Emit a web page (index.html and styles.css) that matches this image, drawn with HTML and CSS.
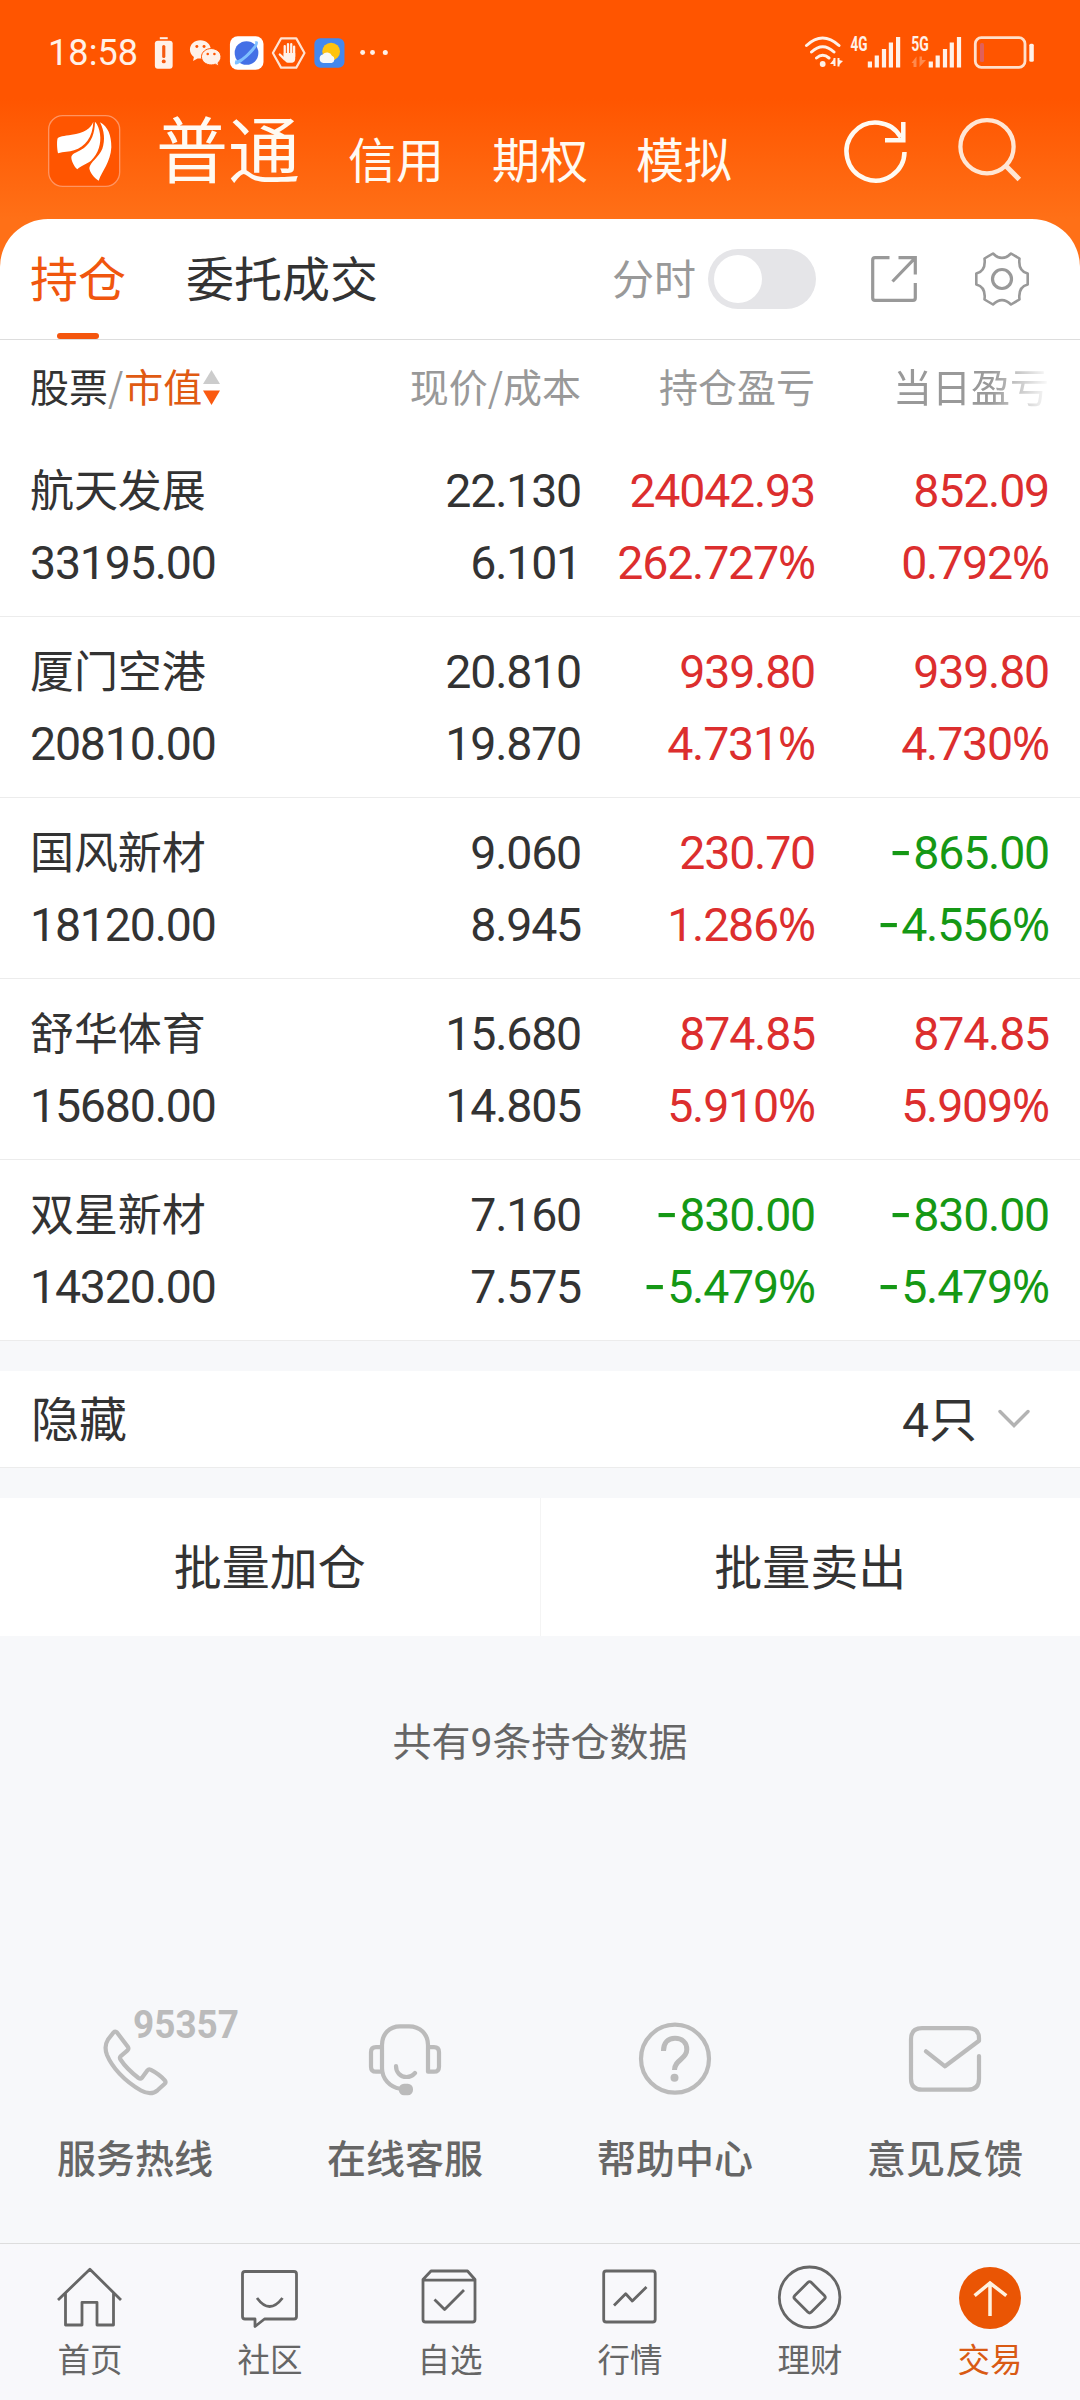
FILE: index.html
```html
<!DOCTYPE html>
<html lang="zh-CN">
<head>
<meta charset="utf-8">
<title>持仓</title>
<link rel="stylesheet" href="styles.css">
</head>
<body>
<div class="app">
  <header class="top">
    <div class="status">
      <span class="clock">18:58</span>
      <svg class="status-left" width="240" height="46" viewBox="145 30 240 46">
        <g fill="#fff1e8">
          <rect x="160" y="37" width="8" height="2"/>
          <rect x="155" y="40.5" width="18" height="28.5" rx="3"/>
        </g>
        <path d="M164 46.500v10" stroke="#f55a10" stroke-width="3.200" stroke-linecap="round"/>
        <circle cx="164" cy="61.500" r="2" fill="#f55a10"/>
        <g fill="#fff1e8">
          <path d="M201 40c-6 0-10.500 4.200-10.500 9.500 0 3.200 1.500 6 4 7.600l-.8 4 4.500-2.600c7 1 13.500-2.500 13.500-9C211.700 44.200 207 40 201 40z"/>
          <path d="M212 48.500c-5.400 0-9.800 3.700-9.800 8.300s4.400 8.300 9.800 8.300c1.500 0 3-.3 4.200-.8l3.500 2-.8-3.400c1.900-1.500 3-3.700 3-6.100 0-4.600-4.500-8.300-9.900-8.300z" stroke="#ff5500" stroke-width="1"/>
        </g>
        <g fill="#ff5500"><circle cx="197.500" cy="46.500" r="1.500"/><circle cx="204.800" cy="46.500" r="1.500"/><circle cx="208.500" cy="54" r="1.300"/><circle cx="215.300" cy="54" r="1.300"/></g>
        <rect x="231" y="36" width="34" height="34" rx="8" fill="#fff"/>
        <circle cx="247.800" cy="53" r="12" fill="#4470e6"/>
        <path d="M256 41.500c6-2.500 3.500 5-3.500 12S236 68 236 63c0-1.200.5-2.500 1.200-3.500 0 3 6-1 12-7s9-10 6.800-11z" fill="#7fc0ff"/>
        <path d="M274.500 53l8.300-14.800h15.400l8.300 14.800-8.300 14.800h-15.400z" fill="none" stroke="#ffe3d2" stroke-width="2.200" stroke-linejoin="round"/>
        <g stroke="#fff1e8" stroke-width="2.300" stroke-linecap="round"><path d="M286.500 46v10M289.800 44v10M293.100 44v10M296 46.500v10M281.500 54.500l5 5"/></g>
        <path d="M285.500 53h11.600v5.500q0 4-3 4.300h-4.600q-2 0-4-4z" fill="#fff1e8"/>
        <rect x="316.500" y="38" width="30.500" height="30" rx="6" fill="#4388ee"/>
        <circle cx="333.500" cy="51.500" r="9" fill="#ffc30e"/>
        <path d="M325.500 63a4.300 4.300 0 0 1-.5-8.400 5.300 5.300 0 0 1 9.300 1.300 3.700 3.700 0 0 1-.3 7.100z" fill="#f7f7f7"/>
        <g fill="#fff1e8"><circle cx="365.400" cy="52.500" r="2.500"/><circle cx="375.400" cy="52.500" r="2.500"/></g>
      </svg>
      <svg class="status-dot" width="6" height="46" viewBox="382 30 6 46"><circle cx="385.300" cy="52.500" r="2.500" fill="#fff1e8"/></svg>
      <svg class="status-right" width="240" height="46" viewBox="800 30 240 46">
        <g fill="none" stroke="#fff1e8" stroke-width="3" stroke-linecap="round">
          <path d="M806.500 45.500q16-15 32.500 0M811.500 52q11.200-10.500 22.500 0M816.500 58q6.200-5.500 12.500 0"/>
        </g>
        <circle cx="822.700" cy="64" r="2.900" fill="#fff1e8"/>
        <path d="M834.500 58v8M838.500 58v8.500" stroke="#fff1e8" stroke-width="2"/>
        <path d="M830 64l4-5v5zM839 60v5l4-4z" fill="#fff1e8"/>
        <text class="net" x="850.500" y="50.700" textLength="17" lengthAdjust="spacingAndGlyphs">4G</text>
        <path d="M869.900 61.500v6M876.800 55.500v12M884 49v18.500M890.900 42.500v25M898.100 37v30.500" stroke="#fff1e8" stroke-width="4.200"/>
        <text class="net" x="911.300" y="50.700" textLength="17.500" lengthAdjust="spacingAndGlyphs">5G</text>
        <path d="M911.500 63l5-6.500V67h-3v-4zM919.500 56.500h2.500V60h4l-6.500 7z" fill="#ff8a4d"/>
        <path d="M930.800 61.500v6M937.700 55.500v12M945 49v18.500M951.800 42.500v25M959 37v30.500" stroke="#fff1e8" stroke-width="4.200"/>
        <rect x="975.300" y="37.700" width="49.700" height="29.600" rx="6" fill="none" stroke="#ffe0cc" stroke-width="2.800"/>
        <rect x="980" y="43" width="4" height="19" rx="1.500" fill="#e0605a"/>
        <rect x="1029.300" y="43.700" width="4.500" height="18" rx="1.500" fill="#fff1e8"/>
      </svg>
    </div>
    <div class="nav">
      <svg class="logo" width="88" height="88" viewBox="0 0 264 264">
        <rect x="26" y="23" width="213" height="212" rx="42" fill="#ff5500" stroke="#ff9461" stroke-width="4"/>
        <g fill="#fff">
          <path d="M160 41C152 62 132 75 95 80C72 83 56 86 53 91C50 99 51 121 54 136C70 131 88 132 102 127C136 116 158 88 160 41Z"/>
          <path d="M165 41C164 76 155 101 132 120C116 132 97 135 94 146C93 158 103 176 112 184C122 172 140 169 153 158C176 136 184 105 180 78C178 62 173 49 165 41Z"/>
          <path d="M180 43C193 68 196 97 187 122C177 148 150 162 148 180C149 194 163 210 176 218C186 190 212 162 214 118C214 82 204 56 180 43Z"/>
        </g>
      </svg>
      <nav class="modes">
        <a class="mode mode-on">普通</a>
        <a class="mode">信用</a>
        <a class="mode">期权</a>
        <a class="mode">模拟</a>
      </nav>
      <svg width="72" height="72" viewBox="840 117 72 72" fill="none" stroke="#fffaf2" stroke-width="4.500">
        <path d="M904.500 153a29 29 0 1 1-3.600-14.500M903.300 123v18.200H885"/>
      </svg>
      <svg class="search" width="76" height="72" viewBox="952 117 76 72" fill="none" stroke="#ffe6d4" stroke-width="4.300">
        <circle cx="987" cy="147.700" r="26.600"/>
        <path d="M1005.500 166.500L1019.300 180.500" stroke-width="5"/>
      </svg>
    </div>
  </header>

  <main class="sheet">
    <div class="tabs">
      <a class="tab tab-on">持仓</a>
      <a class="tab">委托成交</a>
      <span class="tabs-space"></span>
      <span class="chart-label">分时</span>
      <span class="switch"><span class="knob"></span></span>
      <svg class="share" width="50" height="50" viewBox="869 254 50 50" fill="none" stroke="#999" stroke-width="3.200">
        <path d="M889.500 257.700H875Q872.700 257.700 872.700 260V298Q872.700 300.300 875 300.300H913Q915.300 300.300 915.300 298V283M898.500 257.700H915.300V274.500M914.500 258.700L892.500 281.500"/>
      </svg>
      <svg width="60" height="60" viewBox="-30 -30 60 60" fill="none" stroke="#999" stroke-width="2.600" stroke-linejoin="round">
        <circle r="9.500" stroke-width="3.200"/>
        <path d="M9 -25.500Q0 -16.500 -9 -25.500L-17.500 -20.500Q-15.900 -8 -25.700 -5.500V5.500Q-15.900 8 -17.500 20.500L-9 25.500Q0 16.500 9 25.500L17.500 20.500Q15.900 8 25.700 5.500V-5.500Q15.900 -8 17.500 -20.500Z"/>
      </svg>
    </div>

    <div class="grid head">
      <div class="sort"><span class="dark">股票</span><span class="slash">/</span><span class="accent">市值</span>
        <svg width="17" height="36" viewBox="0 0 17 36"><path d="M8.500 0L17 14H0z" fill="#ccc"/><path d="M0 20.500H17L8.500 35z" fill="#fa5a10"/></svg>
      </div>
      <div>现价/成本</div>
      <div>持仓盈亏</div>
      <div class="fade">当日盈亏</div>
    </div>

    <div class="grid row">
      <div class="name">航天发展</div><div>22.130</div><div class="up">24042.93</div><div class="up">852.09</div>
      <div>33195.00</div><div>6.101</div><div class="up">262.727<b>%</b></div><div class="up">0.792<b>%</b></div>
    </div>
    <div class="grid row">
      <div class="name">厦门空港</div><div>20.810</div><div class="up">939.80</div><div class="up">939.80</div>
      <div>20810.00</div><div>19.870</div><div class="up">4.731<b>%</b></div><div class="up">4.730<b>%</b></div>
    </div>
    <div class="grid row">
      <div class="name">国风新材</div><div>9.060</div><div class="up">230.70</div><div class="down"><i>-</i>865.00</div>
      <div>18120.00</div><div>8.945</div><div class="up">1.286<b>%</b></div><div class="down"><i>-</i>4.556<b>%</b></div>
    </div>
    <div class="grid row">
      <div class="name">舒华体育</div><div>15.680</div><div class="up">874.85</div><div class="up">874.85</div>
      <div>15680.00</div><div>14.805</div><div class="up">5.910<b>%</b></div><div class="up">5.909<b>%</b></div>
    </div>
    <div class="grid row">
      <div class="name">双星新材</div><div>7.160</div><div class="down"><i>-</i>830.00</div><div class="down"><i>-</i>830.00</div>
      <div>14320.00</div><div>7.575</div><div class="down"><i>-</i>5.479<b>%</b></div><div class="down"><i>-</i>5.479<b>%</b></div>
    </div>
  </main>

  <section class="hidden-row">
    <span>隐藏</span>
    <span class="count"><b>4</b>只</span>
    <svg width="32" height="20" viewBox="0 0 32 20" fill="none" stroke="#b3b3b3" stroke-width="3.400" stroke-linecap="round"><path d="M2 2.500L16 16.500L30 2.500"/></svg>
  </section>

  <section class="batch">
    <a>批量加仓</a>
    <a>批量卖出</a>
  </section>

  <p class="total">共有<b>9</b>条持仓数据</p>

  <section class="services">
    <a class="service">
      <svg width="270" height="110" viewBox="0 2000 270 110">
        <path d="M113.500 2032.500Q115.400 2030.700 117 2032.500L128 2047Q129 2048.700 127.500 2050.300L120.500 2056.300Q119.300 2057.700 120.500 2059.500C126 2068 132 2073 138.500 2078Q140.500 2079.300 142 2077.700L147.500 2070.300Q148.800 2068.700 150.500 2069.700C157 2073 161 2076 165 2080.700Q166.200 2082.500 164.500 2084L157.500 2090.300C152 2095 146.500 2093.500 141 2090.500C124 2081 112 2067 107 2055C104.500 2048.500 105.500 2043.500 108 2039.500Z"/>
        <text class="hotline" x="133" y="2038" textLength="106" lengthAdjust="spacingAndGlyphs">95357</text>
      </svg>
      <span>服务热线</span>
    </a>
    <a class="service">
      <svg width="270" height="110" viewBox="270 2000 270 110">
        <path d="M400 2088.800C390 2087 382 2079 382 2068V2045C382 2034 389.500 2026.300 400 2026.300H409C420 2026.300 428 2034 428 2045V2071.700H434Q439 2071.700 439 2066.700V2052.200Q439 2047.200 434 2047.200H428M382 2047.200H376Q371 2047.200 371 2052.200V2066.700Q371 2071.700 376 2071.700H382M396 2066C396 2072 400 2077 406.500 2077Q411.500 2077 415 2073"/>
        <rect class="solid" x="398.800" y="2083.700" width="14.200" height="11.500" rx="5.200"/>
      </svg>
      <span>在线客服</span>
    </a>
    <a class="service">
      <svg width="270" height="110" viewBox="540 2000 270 110">
        <circle cx="675" cy="2058.700" r="34"/>
        <path class="butt" d="M663.500 2051C663.500 2042.500 668 2038.300 675 2038.300S686.800 2042.500 686.800 2049.500C686.800 2059.500 674.500 2059.500 674.500 2070"/>
        <circle class="solid" cx="674.500" cy="2077.700" r="4"/>
      </svg>
      <span>帮助中心</span>
    </a>
    <a class="service">
      <svg width="270" height="110" viewBox="810 2000 270 110">
        <path d="M979 2056V2078.700Q979 2089.700 968 2089.700H922Q911 2089.700 911 2078.700V2039.200Q911 2028.200 922 2028.200H968Q979 2028.200 979 2038.200V2040.700L945 2066.300L926 2051.300"/>
      </svg>
      <span>意见反馈</span>
    </a>
  </section>

  <footer class="tabbar">
    <a class="item">
      <svg width="180" height="76" viewBox="0 2258 180 76"><path d="M58 2300L89.900 2269.300L121 2300M65.500 2293V2325H82V2302.300H97V2325H113.500V2293"/></svg>
      <span>首页</span>
    </a>
    <a class="item">
      <svg width="180" height="76" viewBox="180 2258 180 76"><path d="M245 2271.500H294Q296.500 2271.500 296.500 2274V2316.500Q296.500 2319 294 2319H264.500L255 2326.500V2319H245Q242.500 2319 242.500 2316.500V2274Q242.500 2271.500 245 2271.500ZM257 2298Q269.500 2315 282.500 2298"/></svg>
      <span>社区</span>
    </a>
    <a class="item">
      <svg width="180" height="76" viewBox="360 2258 180 76"><path d="M423 2279.500L431 2271H467.500L475 2279.500V2319.500Q475 2322 472.500 2322H425.500Q423 2322 423 2319.500ZM423 2280.200H475M434.500 2299.500L444.600 2309.500L464 2290"/></svg>
      <span>自选</span>
    </a>
    <a class="item">
      <svg width="180" height="76" viewBox="540 2258 180 76"><rect x="603.700" y="2271" width="51.500" height="51" rx="2.500"/><path d="M614 2305.500L625.700 2293.700L632.300 2301L646.500 2287"/></svg>
      <span>行情</span>
    </a>
    <a class="item">
      <svg width="180" height="76" viewBox="720 2258 180 76"><circle cx="809.600" cy="2297.300" r="30.300"/><rect x="797.900" y="2285.600" width="23.400" height="23.400" rx="2.500" transform="rotate(45 809.600 2297.300)"/></svg>
      <span>理财</span>
    </a>
    <a class="item item-on">
      <svg width="180" height="76" viewBox="900 2258 180 76"><circle class="disc" cx="990" cy="2298" r="31"/><path class="arrow" d="M990 2316V2283M974.600 2295.700L990 2283L1006.300 2295.700"/></svg>
      <span>交易</span>
    </a>
  </footer>
</div>
</body>
</html>
```
FILE: styles.css
```css
* { box-sizing: border-box; }

body {
  margin: 0;
  background: #f7f8fa;
  color: #333;
  font-family: "Noto Sans CJK SC", sans-serif;
}

svg { display: block; flex: none; }

b, i { font-weight: 400; font-style: normal; }

.app {
  display: flex;
  flex-direction: column;
  width: 1080px;
  height: 2400px;
  overflow: hidden;
}

/* Orange header */
.top {
  height: 279px;
  flex: none;
  background: linear-gradient(#ff5500 0, #ff5500 98px, #ff7017 219px);
  color: #fffaf2;
}

.status {
  display: flex;
  align-items: center;
  height: 76px;
  padding: 30px 40px 0 48px;
}

.clock {
  width: 97px;
  font: 400 36px/46px Roboto, sans-serif;
  letter-spacing: 0.1px;
  color: #fff1e8;
}

.status-left { width: 237px; height: 46px; }
.status-dot { margin-right: auto; }

.net {
  font: 700 20px Roboto, sans-serif;
  fill: #fff1e8;
}

.nav {
  display: flex;
  align-items: center;
  height: 88px;
  margin-top: 32px;
  padding: 0 52px 0 40px;
}

.modes {
  display: flex;
  align-items: flex-end;
  gap: 48px;
  flex: 1;
  height: 88px;
  padding: 0 0 11px 28px;
}

.mode { font-size: 48px; line-height: 48px; padding-bottom: 4px; }
.mode-on { font-size: 72px; line-height: 72px; padding-bottom: 3px; }

.search { margin-left: 40px; }

/* White sheet with holdings */
.sheet {
  margin-top: -60px;
  background: #fff;
  border-radius: 48px 48px 0 0;
}

.tabs {
  display: flex;
  align-items: center;
  height: 121px;
  padding: 0 48px 0 30px;
  border-bottom: 1px solid #ddd;
}

.tab {
  margin-right: 60px;
  height: 120px;
  font-size: 48px;
  line-height: 114px;
}

.tab-on {
  display: flex;
  flex-direction: column;
  color: #f0560e;
}

.tab-on::after {
  content: "";
  width: 42px;
  height: 6px;
  margin: 0 auto;
  border-radius: 3px;
  background: #f4560e;
}

.tabs-space { flex: 1; }

.chart-label {
  font-size: 42px;
  line-height: 60px;
  padding-bottom: 4px;
  color: #999;
}

.switch {
  width: 108px;
  height: 60px;
  margin: 0 53px 0 12px;
  padding: 6px;
  border-radius: 30px;
  background: #e5e5e8;
}

.knob {
  display: block;
  width: 48px;
  height: 48px;
  border-radius: 50%;
  background: #fff;
}

.share { margin-right: 53px; }

.grid {
  display: grid;
  grid-template-columns: 1fr 234px 234px 234px;
  padding: 0 31px 0 30px;
  text-align: right;
}

.grid > :nth-child(4n + 1) { text-align: left; }

.head {
  height: 96px;
  font-size: 39px;
  line-height: 91px;
  color: #999;
}

.grid .sort {
  display: flex;
  align-items: center;
  height: 96px;
  padding-bottom: 5px;
}

.sort svg { margin: 5px 0 0 1px; }
.slash { padding-right: 1px; }
.dark { color: #333; }
.accent { color: #e05a12; }

.fade {
  -webkit-mask-image: linear-gradient(90deg, #000 176px, transparent 236px);
  mask-image: linear-gradient(90deg, #000 176px, transparent 236px);
}

.row {
  height: 181px;
  padding-top: 19px;
  grid-auto-rows: 72px;
  border-bottom: 1px solid #ececec;
  font: 400 46.5px/72px Roboto, sans-serif;
  letter-spacing: -1.2px;
}

.row .name {
  font: 400 44px/67px "Noto Sans CJK SC", sans-serif;
  letter-spacing: -0.1px;
}

.up { color: #dc2e2e; }
.down { color: #159815; }

.row b {
  font: 400 46px/60px "Noto Sans", sans-serif;
}

.down i {
  margin-right: 2px;
  font: 400 51px/60px Inter, sans-serif;
}

/* Collapsed holdings */
.hidden-row {
  display: flex;
  align-items: center;
  height: 97px;
  flex: none;
  margin-top: 30px;
  padding: 0 50px 0 31px;
  background: #fff;
  border-bottom: 1px solid #ececec;
  font-size: 48px;
  line-height: 90px;
}

.hidden-row > span { height: 97px; }
.count { margin: 0 21px 0 auto; }
.count b { font-family: Roboto, sans-serif; }

.batch {
  display: flex;
  height: 138px;
  flex: none;
  margin-top: 30px;
  background: #fff;
}

.batch a {
  flex: 1;
  font-size: 48px;
  line-height: 132px;
  text-align: center;
}

.batch a:first-child { border-right: 1px solid #f4f4f4; }

.total {
  margin: 75px 0 0;
  font-size: 39px;
  line-height: 56px;
  text-align: center;
  color: #666;
}

.total b { font-family: Roboto, sans-serif; }

/* Service shortcuts */
.services {
  display: flex;
  margin-top: auto;
  height: 243px;
  flex: none;
}

.service {
  width: 270px;
  text-align: center;
  font-weight: 500;
  font-size: 39px;
  line-height: 56px;
  color: #666;
}

.service span { display: block; margin-top: 18px; }

.service svg {
  fill: none;
  stroke: #bbb;
  stroke-width: 4.2px;
  stroke-linecap: round;
  stroke-linejoin: round;
}

.service .solid { fill: #bbb; stroke: none; }
.service .butt { stroke-linecap: butt; stroke-width: 5px; }

.service .hotline {
  font: 700 38px Roboto, sans-serif;
  fill: #bbb;
  stroke: none;
}

/* Bottom tab bar */
.tabbar {
  display: flex;
  height: 157px;
  flex: none;
  padding-top: 14px;
  border-top: 1px solid #ddd;
  background: #f8f8fb;
}

.item {
  width: 180px;
  text-align: center;
  font-size: 32.5px;
  line-height: 48px;
  color: #666;
}

.item span { display: block; }

.item svg {
  fill: none;
  stroke: #666;
  stroke-width: 2.8px;
  stroke-linejoin: round;
}

.item-on { color: #d95a14; }
.item .disc { fill: #ea5504; stroke: none; }
.item .arrow { stroke: #fff2e0; stroke-width: 3.5px; stroke-linejoin: miter; }
```
